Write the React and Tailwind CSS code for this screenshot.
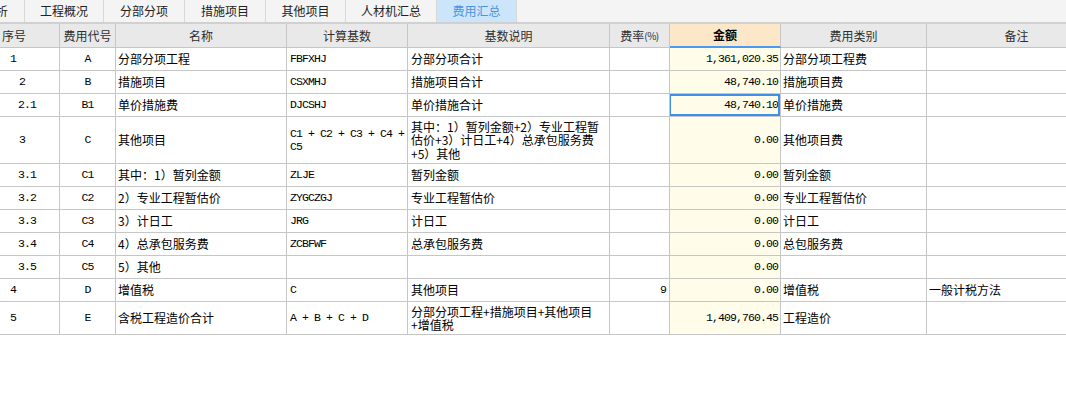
import React from 'react';

const gridCols = 'grid grid-cols-[60px_56px_171px_121px_202px_60px_111px_146px_180px]';
const mono = "font-['Liberation_Mono','Noto_Sans_CJK_SC',monospace] text-[11.5px] tracking-[-0.9px]";

const tabs = [
  { label: '分析', w: 'w-[57px] -ml-[32px]' },
  { label: '工程概况', w: 'w-[79px]' },
  { label: '分部分项', w: 'w-[81px]' },
  { label: '措施项目', w: 'w-[81px]' },
  { label: '其他项目', w: 'w-[80px]' },
  { label: '人材机汇总', w: 'w-[91px]' },
  { label: '费用汇总', w: 'w-[80px]', active: true },
];

const rows = [
  { no: '1', pad: 'pl-[10px]', code: 'A', name: '分部分项工程', base: 'FBFXHJ', desc: '分部分项合计', rate: '', amt: '1,361,020.35', cat: '分部分项工程费', note: '', h: 'h-[23px]' },
  { no: '2', pad: 'pl-[19px]', code: 'B', name: '措施项目', base: 'CSXMHJ', desc: '措施项目合计', rate: '', amt: '48,740.10', cat: '措施项目费', note: '', h: 'h-[23px]' },
  { no: '2.1', pad: 'pl-[18px]', code: 'B1', name: '单价措施费', base: 'DJCSHJ', desc: '单价措施合计', rate: '', amt: '48,740.10', cat: '单价措施费', note: '', h: 'h-[23px]', selected: true },
  { no: '3', pad: 'pl-[19px]', code: 'C', name: '其他项目', base: 'C1 + C2 + C3 + C4 +\nC5', desc: '其中：1）暂列金额+2）专业工程暂\n估价+3）计日工+4）总承包服务费\n+5）其他', rate: '', amt: '0.00', cat: '其他项目费', note: '', h: 'h-[47px]' },
  { no: '3.1', pad: 'pl-[18px]', code: 'C1', name: '其中：1）暂列金额', base: 'ZLJE', desc: '暂列金额', rate: '', amt: '0.00', cat: '暂列金额', note: '', h: 'h-[23px]' },
  { no: '3.2', pad: 'pl-[18px]', code: 'C2', name: '2）专业工程暂估价', base: 'ZYGCZGJ', desc: '专业工程暂估价', rate: '', amt: '0.00', cat: '专业工程暂估价', note: '', h: 'h-[23px]' },
  { no: '3.3', pad: 'pl-[18px]', code: 'C3', name: '3）计日工', base: 'JRG', desc: '计日工', rate: '', amt: '0.00', cat: '计日工', note: '', h: 'h-[23px]' },
  { no: '3.4', pad: 'pl-[18px]', code: 'C4', name: '4）总承包服务费', base: 'ZCBFWF', desc: '总承包服务费', rate: '', amt: '0.00', cat: '总包服务费', note: '', h: 'h-[23px]' },
  { no: '3.5', pad: 'pl-[18px]', code: 'C5', name: '5）其他', base: '', desc: '', rate: '', amt: '0.00', cat: '', note: '', h: 'h-[23px]' },
  { no: '4', pad: 'pl-[10px]', code: 'D', name: '增值税', base: 'C', desc: '其他项目', rate: '9', amt: '0.00', cat: '增值税', note: '一般计税方法', h: 'h-[23px]' },
  { no: '5', pad: 'pl-[10px]', code: 'E', name: '含税工程造价合计', base: 'A + B + C + D', desc: '分部分项工程+措施项目+其他项目\n+增值税', rate: '', amt: '1,409,760.45', cat: '工程造价', note: '', h: 'h-[33px]' },
];

const cell = 'flex items-center border-r border-b border-[#c6c6c6] overflow-hidden whitespace-pre-line';

function HeaderRow() {
  const hc = 'flex items-center justify-center border-r border-b border-[#c6c6c6] bg-[#e9e9e9] text-[#2e2e2e]';
  return (
    <div className={`${gridCols} h-[24px]`}>
      <div className="flex items-center pl-[2px] border-r border-b border-[#c6c6c6] bg-[#e9e9e9] text-[#2e2e2e]">序号</div>
      <div className={hc}>费用代号</div>
      <div className={hc}>名称</div>
      <div className={hc}>计算基数</div>
      <div className={hc}>基数说明</div>
      <div className={hc}>
        费率<span className="text-[10px] tracking-[-0.5px]">(%)</span>
      </div>
      <div className="flex items-center justify-center border-r border-r-[#c6c6c6] border-b-2 border-b-[#4a9af0] bg-[#fde7c9] font-bold text-black">
        金额
      </div>
      <div className={hc}>费用类别</div>
      <div className={hc}>备注</div>
    </div>
  );
}

function Row({ r }) {
  return (
    <div className={`${gridCols} ${r.h} text-black`}>
      <div className={`${cell} ${r.pad} ${mono}`}>{r.no}</div>
      <div className={`${cell} justify-center ${mono}`}>{r.code}</div>
      <div className={`${cell} pl-[2px]`}>{r.name}</div>
      <div className={`${cell} pl-[3px] leading-[13.5px] ${mono}`}>{r.base}</div>
      <div className={`${cell} pl-[3px] leading-[13.5px]`}>{r.desc}</div>
      <div className={`${cell} justify-end pr-[3px] ${mono}`}>{r.rate}</div>
      <div className={`${cell} relative justify-end pr-[2px] bg-[#fffde9] ${mono}`}>
        {r.amt}
        {r.selected && (
          <div className="absolute -left-px top-0 right-0 bottom-0 border-2 border-[#3d8fea]" />
        )}
      </div>
      <div className={`${cell} pl-[2px]`}>{r.cat}</div>
      <div className={`${cell} pl-[2px]`}>{r.note}</div>
    </div>
  );
}

export default function App() {
  return (
    <div className="w-[1066px] h-[412px] bg-white overflow-hidden font-['Noto_Sans_CJK_SC',sans-serif] text-[12px] leading-[14px]">
      <div className="flex h-[24px] bg-[#f4f4f4] border-b-2 border-[#d0d0d0] overflow-hidden">
        {tabs.map((t) => (
          <div
            key={t.label}
            className={`flex h-full shrink-0 items-center justify-center border-r border-[#d8d8d8] ${t.w} ${
              t.active ? 'bg-[#cce5fb] text-[#4a94e0]' : 'text-[#222]'
            }`}
          >
            {t.label}
          </div>
        ))}
      </div>
      <div className="w-[1107px]">
        <HeaderRow />
        {rows.map((r) => (
          <Row key={r.no} r={r} />
        ))}
      </div>
    </div>
  );
}
